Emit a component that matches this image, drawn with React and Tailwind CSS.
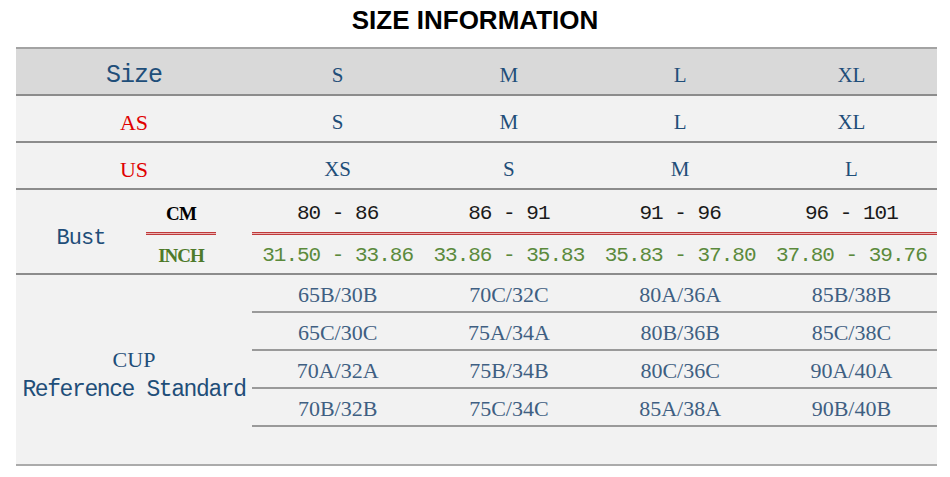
import React from "react";

const sizes = ["S", "M", "L", "XL"];
const asSizes = ["S", "M", "L", "XL"];
const usSizes = ["XS", "S", "M", "L"];
const cm = ["80 - 86", "86 - 91", "91 - 96", "96 - 101"];
const inch = ["31.50 - 33.86", "33.86 - 35.83", "35.83 - 37.80", "37.80 - 39.76"];
const cups = [
	["65B/30B", "70C/32C", "80A/36A", "85B/38B"],
	["65C/30C", "75A/34A", "80B/36B", "85C/38C"],
	["70A/32A", "75B/34B", "80C/36C", "90A/40A"],
	["70B/32B", "75C/34C", "85A/38A", "90B/40B"],
];

const serif = "font-['Liberation_Serif',serif]";
const mono = "font-['Liberation_Mono',monospace]";

const SimpleRow = ({ label, labelClass, values, bg }) => {
	return (
		<div className={`grid grid-cols-[236px_repeat(4,1fr)] h-[47px] pt-[8px] items-center text-center border-b-2 border-[#8c8c8c] ${bg}`}>
			<div className={labelClass}>{label}</div>
			{values.map((v, i) => (
				<div key={i} className={`${serif} text-[21px] text-[#1f4e79]`}>
					{v}
				</div>
			))}
		</div>
	);
};

const RedLine = () => (
	<div className="h-[3px] border-y border-[#c0393b] bg-[#e9b3b3]" />
);

const App = () => {
	return (
		<div className="w-[950px] h-[477px] bg-white">
			<h1 className="h-[47px] pt-[7px] text-center text-[26px] font-bold leading-none text-black font-['Liberation_Sans',Arial,sans-serif]">
				SIZE INFORMATION
			</h1>

			<div className="ml-[16px] w-[921px] border-t-2 border-[#a3a3a3] bg-[#f2f2f2]">
				<SimpleRow
					label="Size"
					labelClass={`${mono} text-[25px] tracking-[-1px] text-[#1f4e79]`}
					values={sizes}
					bg="bg-[#d9d9d9]"
				/>
				<SimpleRow
					label="AS"
					labelClass={`${serif} text-[22px] text-[#e00000]`}
					values={asSizes}
					bg="bg-[#f2f2f2]"
				/>
				<SimpleRow
					label="US"
					labelClass={`${serif} text-[22px] text-[#e00000]`}
					values={usSizes}
					bg="bg-[#f2f2f2]"
				/>

				{/* bust */}
				<div className="grid grid-cols-[236px_1fr] h-[85px] border-b-2 border-[#8c8c8c]">
					<div className="grid grid-cols-[130px_70px_36px]">
						<div className={`flex items-center justify-center pt-[14px] ${mono} text-[22px] tracking-[-1px] text-[#1f4e79]`}>
							Bust
						</div>
						<div className="flex flex-col">
							<div className={`h-[42px] flex items-center justify-center pt-[7px] ${serif} font-bold text-[19px] tracking-[-0.8px] text-black`}>
								CM
							</div>
							<RedLine />
							<div className={`h-[38px] flex items-center justify-center pt-[4px] ${serif} font-bold text-[19px] tracking-[-1px] text-[#4e7a2a]`}>
								INCH
							</div>
						</div>
						<div />
					</div>
					<div className="flex flex-col">
						<div className="grid grid-cols-4 h-[42px] items-center text-center pt-[6px]">
							{cm.map((v, i) => (
								<div key={i} className={`${mono} text-[21px] tracking-[-1px] text-[#1a1a1a] whitespace-pre`}>
									{v}
								</div>
							))}
						</div>
						<RedLine />
						<div className="grid grid-cols-4 h-[38px] items-center text-center pt-[4px]">
							{inch.map((v, i) => (
								<div key={i} className={`${mono} text-[21px] tracking-[-1px] text-[#5b8a3c] whitespace-pre`}>
									{v}
								</div>
							))}
						</div>
					</div>
				</div>

				{/* cup */}
				<div className="grid grid-cols-[236px_1fr] h-[191px] border-b-2 border-[#ababab]">
					<div className="flex flex-col items-center justify-center pt-[10px] leading-[30px] text-[#1f4e79]">
						<div className={`${serif} text-[22px]`}>CUP</div>
						<div className={`${mono} text-[23px] tracking-[-1.4px] whitespace-nowrap`}>Reference Standard</div>
					</div>
					<div className="flex flex-col">
						{cups.map((row, r) => (
							<div key={r} className="grid grid-cols-4 h-[38px] pt-[3px] items-center text-center border-b-2 border-[#9a9a9a]">
								{row.map((v, i) => (
									<div key={i} className={`${serif} text-[22px] text-[#3f5f82]`}>
										{v}
									</div>
								))}
							</div>
						))}
					</div>
				</div>
			</div>
		</div>
	);
};

export default App;
